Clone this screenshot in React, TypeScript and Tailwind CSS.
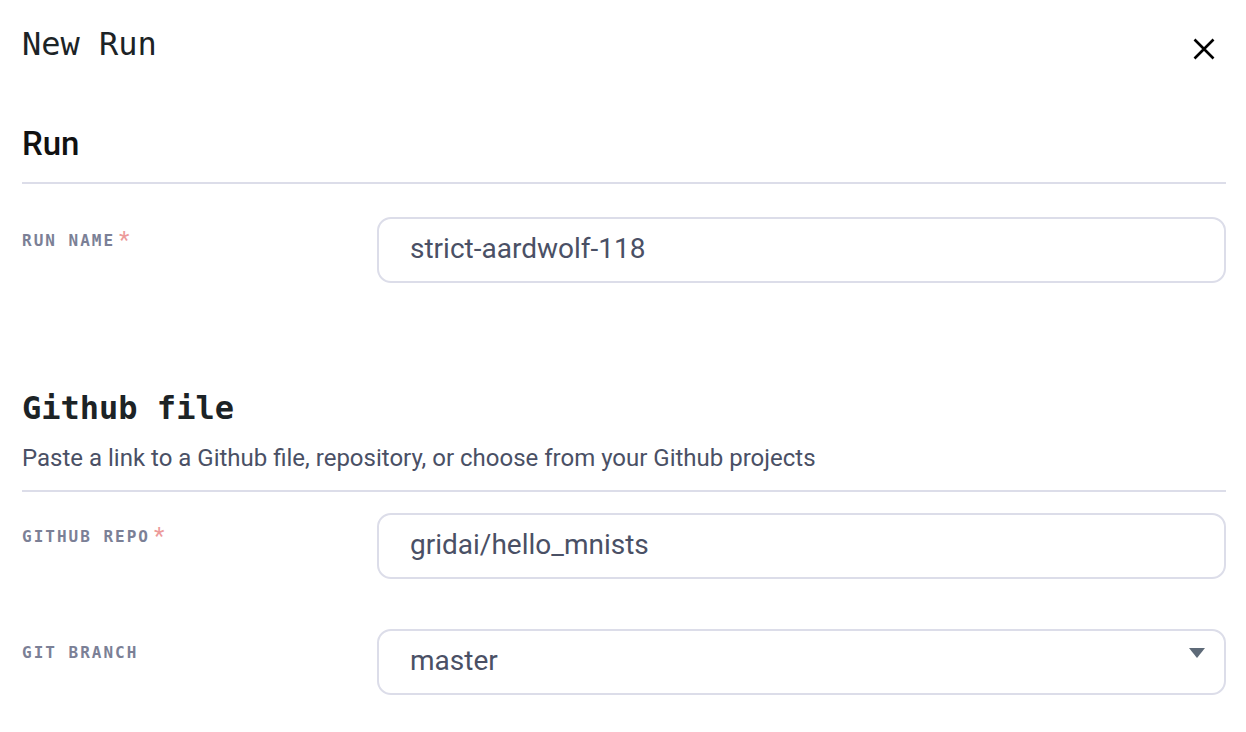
import React from "react";

const mono = "font-['DejaVu_Sans_Mono','Liberation_Mono',monospace]";
const sans = "font-['Roboto','Liberation_Sans',sans-serif]";

function Label({ text, required }: { text: string; required?: boolean }) {
  return (
    <div className="pt-[14px] flex items-start">
      <span
        className={`${mono} text-[16px] leading-[20px] font-bold tracking-[2px] text-[#7b8096]`}
      >
        {text}
      </span>
      {required && (
        <span className={`${sans} text-[24px] leading-[20px] text-[#ec9a9a] ml-[4px] -mt-[1px]`}>*</span>
      )}
    </div>
  );
}

function Field({ value, select }: { value: string; select?: boolean }) {
  return (
    <div className="h-[66px] rounded-[14px] border-2 border-[#dcdde9] flex items-center pl-[31px] pr-[19px] relative">
      <span className={`${sans} text-[28px] text-[#4a5065] flex-1 -mt-[2px]`}>{value}</span>
      {select && (
        <svg width="16" height="10" viewBox="0 0 16 10" className="self-start mt-[17px]">
          <path d="M0 0 L16 0 L8 10 Z" fill="#5e6a78" />
        </svg>
      )}
    </div>
  );
}

export default function App() {
  return (
    <div className="w-[1246px] h-[732px] bg-white pl-[22px] pr-[20px] pt-[24px] overflow-hidden">
      <div className="flex justify-between items-start">
        <h1 className={`${mono} text-[32px] leading-[40px] font-normal text-[#1c2326]`}>New Run</h1>
        <svg width="22" height="22" viewBox="0 0 22 22" className="mt-[14px] mr-[11px]">
          <path d="M1.5 1.5 L20.5 20.5 M20.5 1.5 L1.5 20.5" stroke="#000" strokeWidth="2.6" />
        </svg>
      </div>

      <h2 className={`${sans} text-[33px] leading-[36px] font-medium text-[#111] mt-[62px]`}>Run</h2>
      <div className="h-[2px] bg-[#dcdde9] mt-[20px]" />

      <div className="grid grid-cols-[355px_1fr] mt-[33px]">
        <Label text="RUN NAME" required />
        <Field value="strict-aardwolf-118" />
      </div>

      <h2 className={`${mono} text-[32px] leading-[40px] font-bold text-[#1c2326] mt-[105px]`}>Github file</h2>
      <p className={`${sans} text-[24px] leading-[30px] text-[#4a5065] mt-[15px]`}>
        Paste a link to a Github file, repository, or choose from your Github projects
      </p>
      <div className="h-[2px] bg-[#dcdde9] mt-[17px]" />

      <div className="grid grid-cols-[355px_1fr] mt-[21px]">
        <Label text="GITHUB REPO" required />
        <Field value="gridai/hello_mnists" />
      </div>

      <div className="grid grid-cols-[355px_1fr] mt-[50px]">
        <Label text="GIT BRANCH" />
        <Field value="master" select />
      </div>
    </div>
  );
}
